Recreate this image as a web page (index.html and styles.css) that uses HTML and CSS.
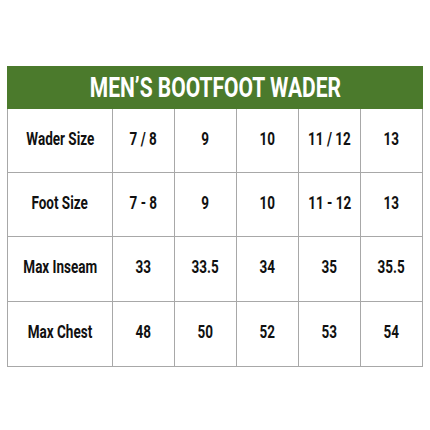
FILE: index.html
```html
<!DOCTYPE html>
<html>
<head>
<meta charset="utf-8">
<link rel="stylesheet" href="styles.css">
</head>
<body>
<div class="page">
  <table class="chart">
    <colgroup>
      <col class="c-label"><col class="c-val"><col class="c-val"><col class="c-val"><col class="c-val"><col class="c-val">
    </colgroup>
    <thead>
      <tr><th colspan="6" class="title"><span class="sq">MEN’S BOOTFOOT WADER</span></th></tr>
    </thead>
    <tbody>
      <tr class="r64"><td><span class="sq">Wader Size</span></td><td><span class="sq">7 / 8</span></td><td><span class="sq">9</span></td><td><span class="sq">10</span></td><td><span class="sq">11 / 12</span></td><td><span class="sq">13</span></td></tr>
      <tr class="r64"><td><span class="sq">Foot Size</span></td><td><span class="sq">7 - 8</span></td><td><span class="sq">9</span></td><td><span class="sq">10</span></td><td><span class="sq">11 - 12</span></td><td><span class="sq">13</span></td></tr>
      <tr class="r65"><td><span class="sq">Max Inseam</span></td><td><span class="sq">33</span></td><td><span class="sq">33.5</span></td><td><span class="sq">34</span></td><td><span class="sq">35</span></td><td><span class="sq">35.5</span></td></tr>
      <tr class="r65"><td><span class="sq">Max Chest</span></td><td><span class="sq">48</span></td><td><span class="sq">50</span></td><td><span class="sq">52</span></td><td><span class="sq">53</span></td><td><span class="sq">54</span></td></tr>
    </tbody>
  </table>
</div>
</body>
</html>
```
FILE: styles.css
```css
html, body { margin: 0; padding: 0; background: #fff; }
.page { width: 430px; height: 430px; padding: 66px 0 0 7px; box-sizing: border-box; }
.chart {
  border-collapse: collapse;
  width: 416px;
  table-layout: fixed;
  font-family: Roboto, "Liberation Sans", sans-serif;
  font-weight: bold;
  color: #111;
}
.c-label { width: 105px; }
.c-val { width: 62px; }
.sq { display: inline-block; transform: scaleX(0.75); white-space: nowrap; }
.title {
  background: #4b7a2c;
  color: #fff;
  height: 41px;
  padding: 0;
  font-size: 28px;
  font-weight: bold;
  text-align: center;
  border: 1px solid #4b7a2c;
  line-height: 41px;
}
.chart td {
  border: 1px solid #a8a8a8;
  padding: 0 0 4px 0;
  text-align: center;
  vertical-align: middle;
  font-size: 18px;
  line-height: 18px;
  box-sizing: border-box;
}
.r64 td { height: 64px; }
.r65 td { height: 65px; }
```
